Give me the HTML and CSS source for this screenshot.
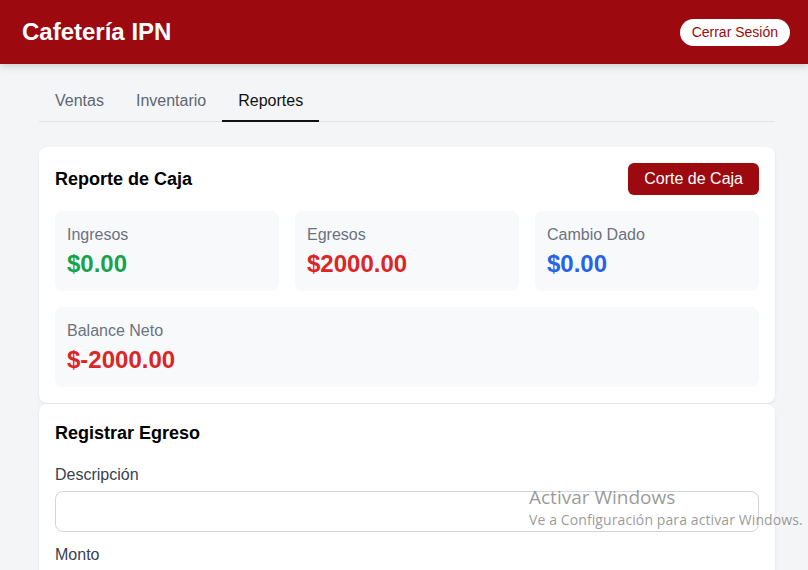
FILE: index.html
```html
<!DOCTYPE html>
<html lang="es">
<head>
<meta charset="utf-8">
<title>Cafetería IPN</title>
<link rel="stylesheet" href="styles.css">
</head>
<body>
<header class="topbar">
  <h1 class="brand">Cafetería IPN</h1>
  <button class="logout">Cerrar Sesión</button>
</header>
<main class="container">
  <nav class="tabs">
    <a class="tab">Ventas</a>
    <a class="tab">Inventario</a>
    <a class="tab active">Reportes</a>
  </nav>
  <section class="card">
    <div class="card-head">
      <h2 class="card-title">Reporte de Caja</h2>
      <button class="primary">Corte de Caja</button>
    </div>
    <div class="stats">
      <div class="stat"><div class="stat-label">Ingresos</div><div class="stat-value green">$0.00</div></div>
      <div class="stat"><div class="stat-label">Egresos</div><div class="stat-value red">$2000.00</div></div>
      <div class="stat"><div class="stat-label">Cambio Dado</div><div class="stat-value blue">$0.00</div></div>
      <div class="stat wide"><div class="stat-label">Balance Neto</div><div class="stat-value red">$-2000.00</div></div>
    </div>
  </section>
  <section class="card form-card">
    <h2 class="card-title form-title">Registrar Egreso</h2>
    <div class="field">
      <label class="label">Descripción</label>
      <input class="input" type="text">
    </div>
    <div class="field">
      <label class="label">Monto</label>
      <input class="input" type="number">
    </div>
  </section>
</main>
<div class="watermark">
  <div class="wm-title">Activar Windows</div>
  <div class="wm-sub">Ve a Configuración para activar Windows.</div>
</div>
</body>
</html>
```

FILE: styles.css
```css
* { box-sizing: border-box; }
html, body { margin: 0; padding: 0; }
body {
  background: #f4f5f7;
  font-family: "Liberation Sans", Arial, sans-serif;
  color: #111;
  overflow: hidden;
  height: 570px;
}
.topbar {
  height: 64px;
  background: #9c0a10;
  display: flex;
  align-items: center;
  justify-content: space-between;
  padding: 0 18px 0 22px;
  box-shadow: 0 2px 8px rgba(0,0,0,0.18);
  position: relative;
}
.brand {
  margin: 0;
  color: #fff;
  font-size: 24px;
  font-weight: 700;
}
.logout {
  background: #fff;
  color: #9c0a10;
  border: none;
  border-radius: 14px;
  height: 27px;
  padding: 0 12px;
  font-family: "Liberation Sans", Arial, sans-serif;
  font-size: 14px;
}
.container {
  width: 736px;
  margin: 0 0 0 39px;
  padding-top: 18px;
}
.tabs {
  display: flex;
  border-bottom: 1px solid #e3e5e8;
  margin-bottom: 25px;
}
.tab {
  font-size: 16px;
  line-height: 18px;
  padding: 10px 16px 10px;
  color: #5f6670;
  border-bottom: 2px solid transparent;
  margin-bottom: -1px;
}
.tab.active {
  color: #111;
  border-bottom-color: #111;
}
.card {
  background: #fff;
  border-radius: 8px;
  padding: 16px;
  box-shadow: 0 1px 3px rgba(0,0,0,0.08);
}
.card-head {
  display: flex;
  align-items: center;
  justify-content: space-between;
  height: 32px;
  margin-bottom: 16px;
}
.card-title {
  margin: 0;
  font-size: 18px;
  font-weight: 700;
  color: #000;
}
.primary {
  background: #9c0a10;
  color: #fff;
  border: none;
  border-radius: 6px;
  height: 32px;
  padding: 0 16px;
  font-family: "Liberation Sans", Arial, sans-serif;
  font-size: 16px;
}
.stats {
  display: grid;
  grid-template-columns: repeat(3, 1fr);
  gap: 16px;
}
.stat {
  background: #f8f9fb;
  border-radius: 8px;
  padding: 13px 12px 12px;
  min-height: 80px;
}
.stat.wide { grid-column: 1 / -1; }
.stat-label {
  font-size: 16px;
  line-height: 22px;
  color: #6b7280;
  margin-bottom: 4px;
}
.stat-value {
  font-size: 24px;
  line-height: 28px;
  font-weight: 700;
}
.green { color: #16a34a; }
.red { color: #dc2626; }
.blue { color: #2563eb; }
.form-card {
  margin-top: 1px;
  border-radius: 8px 8px 0 0;
  padding-top: 19px;
  height: 200px;
}
.form-title {
  line-height: 21px;
  margin-bottom: 21px;
}
.field { margin-bottom: 13px; }
.label {
  display: block;
  font-size: 16px;
  line-height: 20px;
  color: #374151;
  margin-bottom: 6px;
}
.input {
  display: block;
  width: 100%;
  height: 41px;
  border: 1px solid #d1d5db;
  border-radius: 8px;
  background: #fff;
  padding: 0 12px;
  font-size: 16px;
}
.watermark {
  position: absolute;
  left: 529px;
  top: 485px;
  color: rgba(120,120,120,0.75);
  font-family: "Open Sans", "Noto Sans", sans-serif;
  pointer-events: none;
}
.wm-title {
  font-size: 19px;
  line-height: 24px;
  font-weight: 400;
}
.wm-sub {
  font-size: 14px;
  line-height: 22px;
  letter-spacing: 0.1px;
}
```
